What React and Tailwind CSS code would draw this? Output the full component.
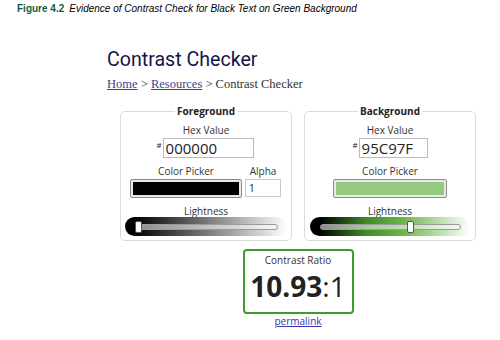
import React from "react";

function Slider({ gradient, thumb }) {
  return (
    <div className={`relative w-full h-[19px] rounded-full ${gradient}`}>
      <div className="absolute left-[10px] right-[9px] top-[7px] h-[6px] rounded-full border border-[#9a9a9a] bg-[rgba(255,255,255,0.55)]" />
      <div
        className="absolute top-[4px] w-[7px] h-[12px] rounded-[2px] border border-[#555] bg-white"
        style={{ left: thumb }}
      />
    </div>
  );
}

export default function App() {
  return (
    <div className="w-[500px] h-[340px] bg-white overflow-hidden">
      <div className="pl-[17px] pt-[3px] text-[10px] leading-[12px] font-['Liberation_Sans',Arial,sans-serif] text-black whitespace-nowrap">
        <span className="font-bold text-[#135a3c]">Figure 4.2</span>
        <span className="italic ml-[5px]">Evidence of Contrast Check for Black Text on Green Background</span>
      </div>

      <h1 className="mt-[33px] ml-[107px] text-[19.6px] leading-[24px] font-['Roboto',sans-serif] text-[#12164a]">
        Contrast Checker
      </h1>

      <div className="mt-[5px] ml-[107px] text-[12.5px] leading-[14px] font-['Liberation_Serif',serif] text-[#333]">
        <span className="underline text-[#3f3f8f]">Home</span> &gt;{" "}
        <span className="underline text-[#3f3f8f]">Resources</span> &gt; Contrast Checker
      </div>

      <div className="mt-[13px] ml-[120px] w-[356px] font-['Open_Sans',sans-serif] text-[#333]">
        <div className="flex gap-[12px]">
          {/* Foreground */}
          <fieldset className="w-[172px] border border-[#dcdcdc] rounded-[5px] px-[4px] pt-[6px] pb-[4px]">
            <legend className="mx-auto px-[2px] text-[10px] leading-[14px] font-bold text-[#222]">Foreground</legend>
            <div className="flex flex-col items-center">
              <div className="text-[10px] leading-[12px]">Hex Value</div>
              <div className="mt-[2px] flex items-start pr-[2px]">
                <span className="text-[8px] leading-[8px] mt-[3px] mr-[1px] text-[#222]">#</span>
                <div className="w-[91px] h-[20px] border border-[#bbb] pl-[2px] text-[15px] leading-[18px] text-[#222]">000000</div>
              </div>
              <div className="mt-[7px] flex gap-[3px] pr-[1px]">
                <div className="flex flex-col items-center">
                  <div className="text-[10px] leading-[12px] mb-[2px]">Color Picker</div>
                  <div className="w-[112px] h-[19px] border border-[#8a8a8a] rounded-[2px] bg-[#e9e9e9] p-[2px]">
                    <div className="w-full h-full bg-black" />
                  </div>
                </div>
                <div className="flex flex-col items-center">
                  <div className="text-[10px] leading-[12px] mb-[2px]">Alpha</div>
                  <div className="w-[36px] h-[18px] border border-[#c8c8c8] pl-[3px] text-[10px] leading-[16px] text-[#111]">1</div>
                </div>
              </div>
              <div className="mt-[7px] text-[10px] leading-[12px]">Lightness</div>
              <div className="w-full">
                <Slider gradient="bg-[linear-gradient(to_right,#000_6%,#fff)]" thumb="10px" />
              </div>
            </div>
          </fieldset>

          {/* Background */}
          <fieldset className="w-[172px] border border-[#dcdcdc] rounded-[5px] px-[5px] pt-[6px] pb-[4px]">
            <legend className="mx-auto px-[2px] text-[10px] leading-[14px] font-bold text-[#222]">Background</legend>
            <div className="flex flex-col items-center">
              <div className="text-[10px] leading-[12px]">Hex Value</div>
              <div className="mt-[2px] flex items-start">
                <span className="text-[8px] leading-[8px] mt-[3px] mr-[1px] text-[#222]">#</span>
                <div className="w-[69px] h-[20px] border border-[#bbb] pl-[2px] text-[15px] leading-[18px] text-[#222]">95C97F</div>
              </div>
              <div className="mt-[7px] flex flex-col items-center">
                <div className="text-[10px] leading-[12px] mb-[2px]">Color Picker</div>
                <div className="w-[114px] h-[19px] border border-[#8a8a8a] rounded-[2px] bg-[#e9e9e9] p-[2px]">
                  <div className="w-full h-full bg-[#95C97F]" />
                </div>
              </div>
              <div className="mt-[7px] text-[10px] leading-[12px]">Lightness</div>
              <div className="w-full">
                <Slider gradient="bg-[linear-gradient(to_right,#000_6%,#3f8a27_35%,#6bb54a_58%,#fff)]" thumb="97px" />
              </div>
            </div>
          </fieldset>
        </div>

        <div className="mt-[8px] flex flex-col items-center">
          <div className="w-[111px] h-[65px] border-2 border-[#3f9a30] rounded-[4px] flex flex-col items-center pt-[3px]">
            <div className="text-[10px] leading-[12px] text-[#333]">Contrast Ratio</div>
            <div className="mt-[4px] text-[28px] leading-[32px] text-[#222] whitespace-nowrap">
              <span className="font-bold">10.93</span>
              <span>:1</span>
            </div>
          </div>
          <div className="mt-[1px] text-[10px] leading-[12px] underline text-[#3535a8]">permalink</div>
        </div>
      </div>
    </div>
  );
}
